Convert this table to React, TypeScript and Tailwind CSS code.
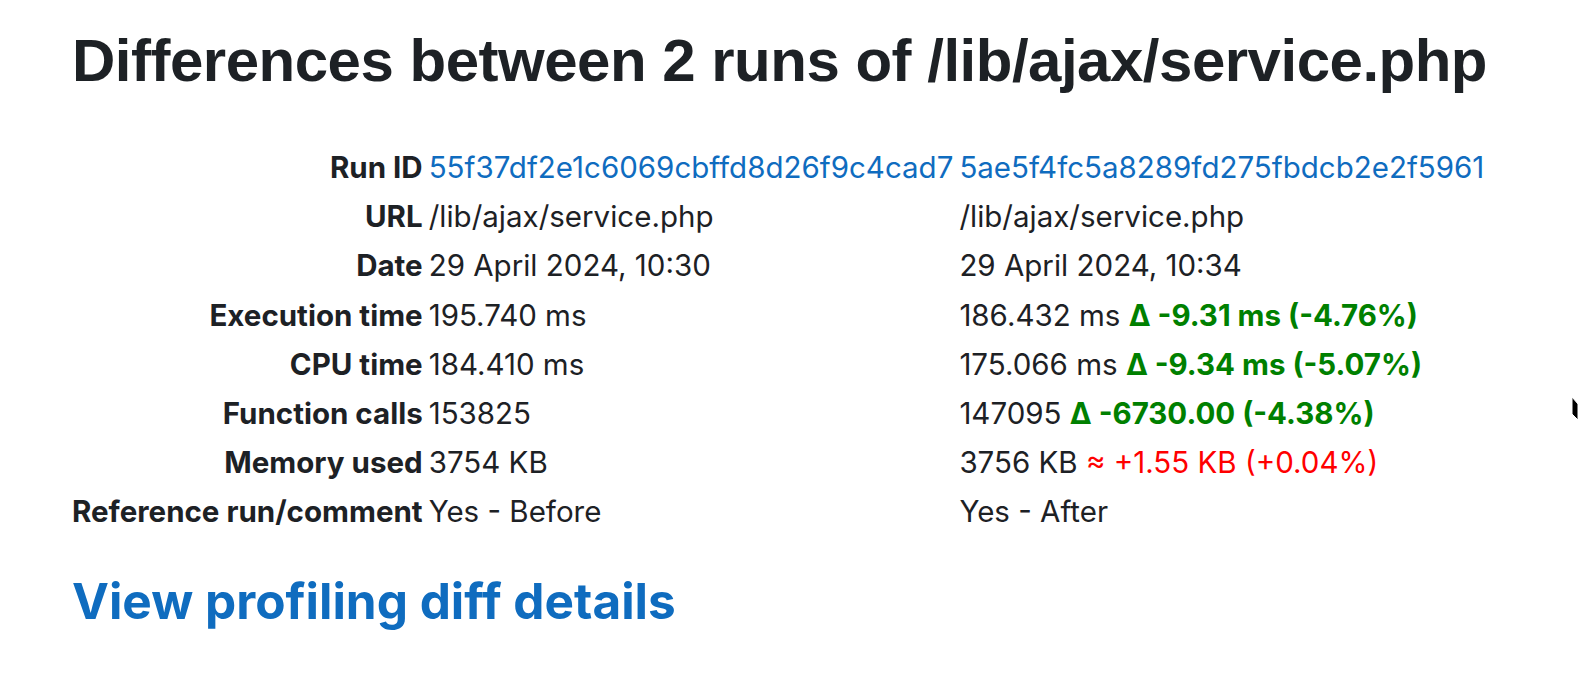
const rows: { label: string; a: React.ReactNode; b: React.ReactNode }[] = [
  {
    label: "Run ID",
    a: <a className="text-[#0f6cbf]">55f37df2e1c6069cbffd8d26f9c4cad7</a>,
    b: <a className="text-[#0f6cbf]">5ae5f4fc5a8289fd275fbdcb2e2f5961</a>,
  },
  { label: "URL", a: "/lib/ajax/service.php", b: "/lib/ajax/service.php" },
  { label: "Date", a: "29 April 2024, 10:30", b: "29 April 2024, 10:34" },
  {
    label: "Execution time",
    a: "195.740 ms",
    b: (
      <>
        186.432 ms <span className="font-bold text-[#008000]">Δ -9.31 ms (-4.76%)</span>
      </>
    ),
  },
  {
    label: "CPU time",
    a: "184.410 ms",
    b: (
      <>
        175.066 ms <span className="font-bold text-[#008000]">Δ -9.34 ms (-5.07%)</span>
      </>
    ),
  },
  {
    label: "Function calls",
    a: "153825",
    b: (
      <>
        147095 <span className="font-bold text-[#008000]">Δ -6730.00 (-4.38%)</span>
      </>
    ),
  },
  {
    label: "Memory used",
    a: "3754 KB",
    b: (
      <>
        3756 KB <span className="text-[#ff0000]">≈ +1.55 KB (+0.04%)</span>
      </>
    ),
  },
  { label: "Reference run/comment", a: "Yes - Before", b: "Yes - After" },
];

export default function App() {
  return (
    <div className="relative min-h-[686px] bg-white pl-[72px] text-[#1d2125]" style={{ fontFamily: "Inter, 'Noto Sans', sans-serif" }}>
      <h1 className="pt-[25px] text-[60px] font-bold leading-[72px] tracking-[-0.5px]" style={{ fontFamily: "'Liberation Sans', Arial, sans-serif" }}>
        Differences between 2 runs of /lib/ajax/service.php
      </h1>

      <div className="mt-[46px] grid grid-cols-[auto_auto_auto] justify-start gap-x-[6px] text-[29.5px] leading-[49.2px]">
        {rows.map((r) => (
          <div key={r.label} className="contents">
            <div className="text-right font-bold">{r.label}</div>
            <div>{r.a}</div>
            <div>{r.b}</div>
          </div>
        ))}
      </div>

      <h2 className="mt-[34px] text-[49.5px] font-bold leading-[60px] text-[#0f6cbf]">View profiling diff details</h2>

      <svg className="absolute right-0 top-[396px]" width="7" height="26" viewBox="0 0 7 26">
        <path d="M1 1 L7 8 L7 24 L1 18 Z" fill="#000" stroke="#fff" strokeWidth="1" />
      </svg>
    </div>
  );
}
